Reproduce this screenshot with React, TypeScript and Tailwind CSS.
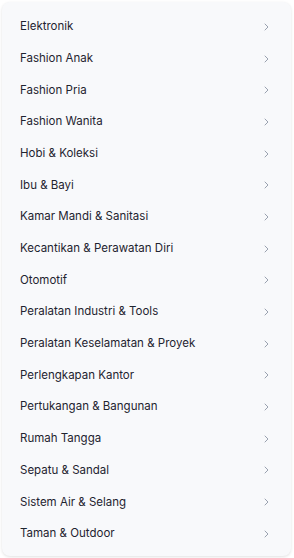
const categories = [
  "Elektronik",
  "Fashion Anak",
  "Fashion Pria",
  "Fashion Wanita",
  "Hobi & Koleksi",
  "Ibu & Bayi",
  "Kamar Mandi & Sanitasi",
  "Kecantikan & Perawatan Diri",
  "Otomotif",
  "Peralatan Industri & Tools",
  "Peralatan Keselamatan & Proyek",
  "Perlengkapan Kantor",
  "Pertukangan & Bangunan",
  "Rumah Tangga",
  "Sepatu & Sandal",
  "Sistem Air & Selang",
  "Taman & Outdoor",
];

function Chevron() {
  return (
    <svg width="5" height="8" viewBox="0 0 5 8" fill="none" className="text-gray-400">
      <path d="M1 1l3 3-3 3" stroke="currentColor" strokeWidth="1" strokeLinecap="round" strokeLinejoin="round" />
    </svg>
  );
}

export default function App() {
  return (
    <div className="w-[294px] h-[558px] bg-white p-[2px] font-['Inter',sans-serif]">
      <div className="rounded-lg bg-[#f8f9fb] shadow-[0_1px_3px_rgba(0,0,0,0.12)] w-[289px] pt-[9px] pb-[6px]">
        {categories.map((c) => (
          <div key={c} className="flex items-center justify-between h-[31.7px] pl-[18px] pr-[22px]">
            <span className="text-[11.5px] text-[#1f2430]">{c}</span>
            <Chevron />
          </div>
        ))}
      </div>
    </div>
  );
}
